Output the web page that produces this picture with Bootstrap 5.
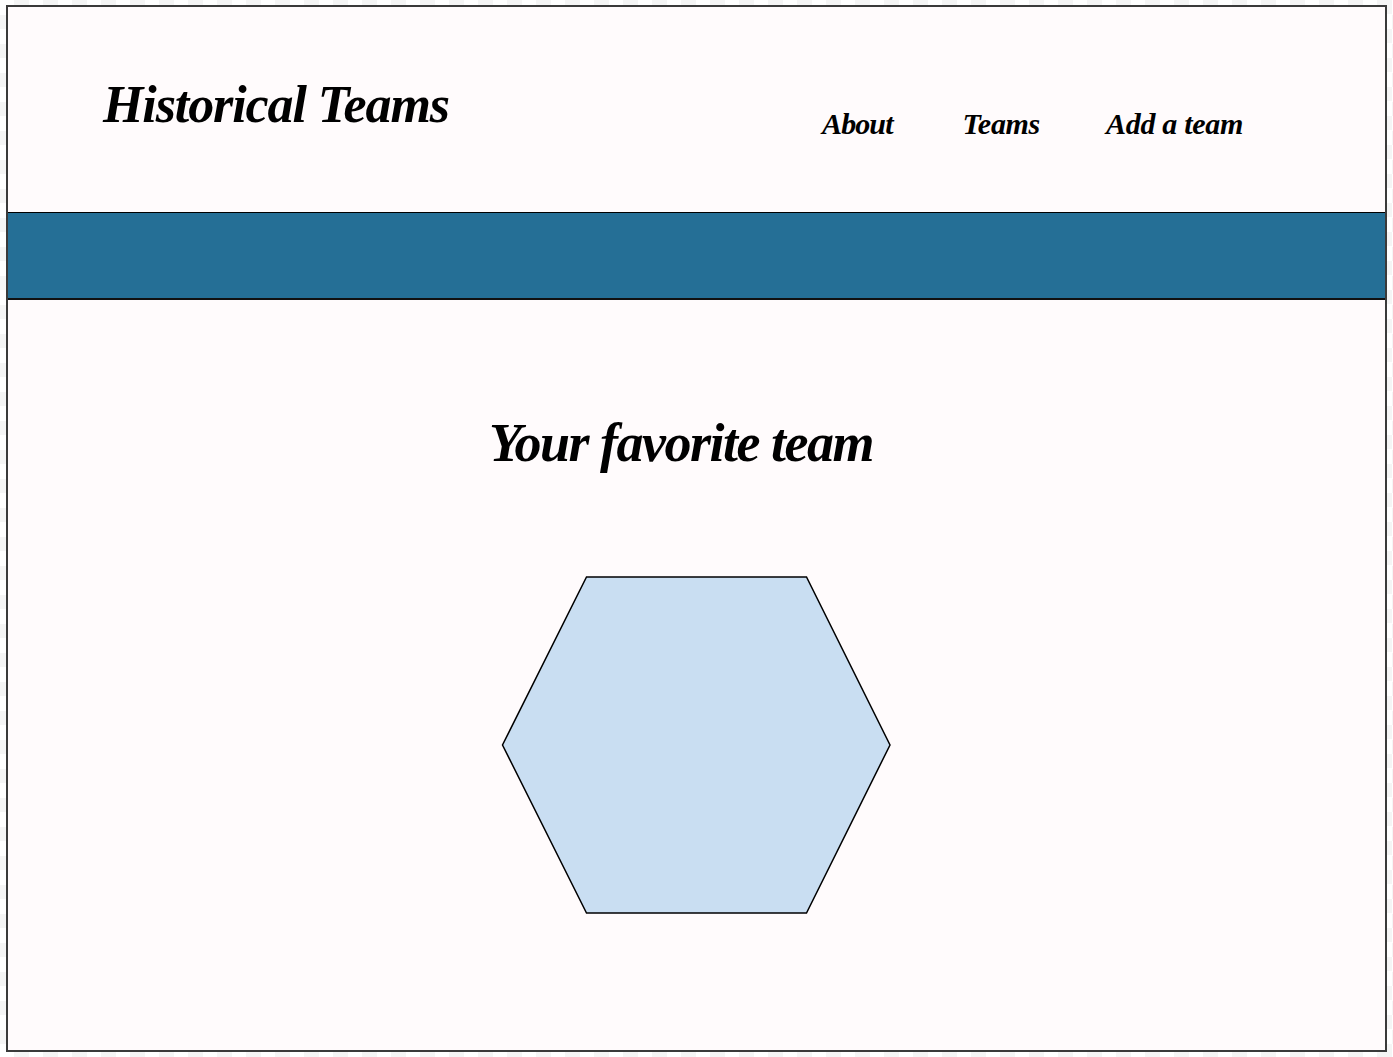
<!DOCTYPE html>
<html lang="en">

<head>
    <meta charset="UTF-8">
    <title>Historical Teams</title>
    <link href="https://cdn.jsdelivr.net/npm/bootstrap@5.3.0/dist/css/bootstrap.min.css" rel="stylesheet">
    <style>
        html, body { height: 100%; }
        body {
            background-color: #fff;
            background-image: repeating-conic-gradient(#f5f5f5 0 25%, #fff 0 50%);
            background-size: 29px 29px;
            padding: 5px 6px 5px 6px;
            font-family: "Liberation Serif", serif;
        }
        .page-frame {
            height: 100%;
            border: 2px solid #3a3a3a;
            background: #fffbfc;
        }
        .top-head { height: 205px; }
        .site-name {
            font-size: 52px;
            font-weight: 700;
            font-style: italic;
            letter-spacing: -1.1px;
            color: #000;
            margin: 68px 0 0 95px;
            line-height: 60px;
        }
        .top-links { margin: 99px 142px 0 0; gap: 66px; }
        .top-links a {
            font-size: 30px;
            font-weight: 700;
            font-style: italic;
            letter-spacing: -.3px;
            line-height: 36px;
            color: #000;
            text-decoration: none;
        }
        .top-links a:first-child { letter-spacing: -.9px; margin-right: 4px; }
        .blue-band {
            height: 88px;
            flex-shrink: 0;
            background: #256f96;
            border-top: 1px solid #000;
            border-bottom: 2px solid #111;
        }
        .fav-title {
            font-size: 54px;
            font-weight: 700;
            font-style: italic;
            letter-spacing: -1.5px;
            line-height: 66px;
            color: #000;
            text-align: center;
            margin: 110px 31px 0 0;
        }
        .hex-wrap { margin: 100px 2px 0 0; }
        .hex-shape { display: block; }
    </style>
</head>

<body>
    <div class="page-frame d-flex flex-column">
        <header class="top-head d-flex justify-content-between align-items-start">
            <div class="site-name">Historical Teams</div>
            <nav class="top-links d-flex">
                <a href="#">About</a>
                <a href="#">Teams</a>
                <a href="#">Add a team</a>
            </nav>
        </header>
        <div class="blue-band"></div>
        <main>
            <h1 class="fav-title">Your favorite team</h1>
            <div class="hex-wrap d-flex justify-content-center">
                <svg class="hex-shape" width="390" height="338" viewBox="0 0 390 338">
                    <polygon points="85.5,1 305.5,1 389,169 305.5,337 85.5,337 1.5,169" fill="#c9def2" stroke="#000" stroke-width="1.5"/>
                </svg>
            </div>
        </main>
    </div>

    <script src="https://cdn.jsdelivr.net/npm/bootstrap@5.3.0/dist/js/bootstrap.bundle.min.js"></script>
</body>

</html>
